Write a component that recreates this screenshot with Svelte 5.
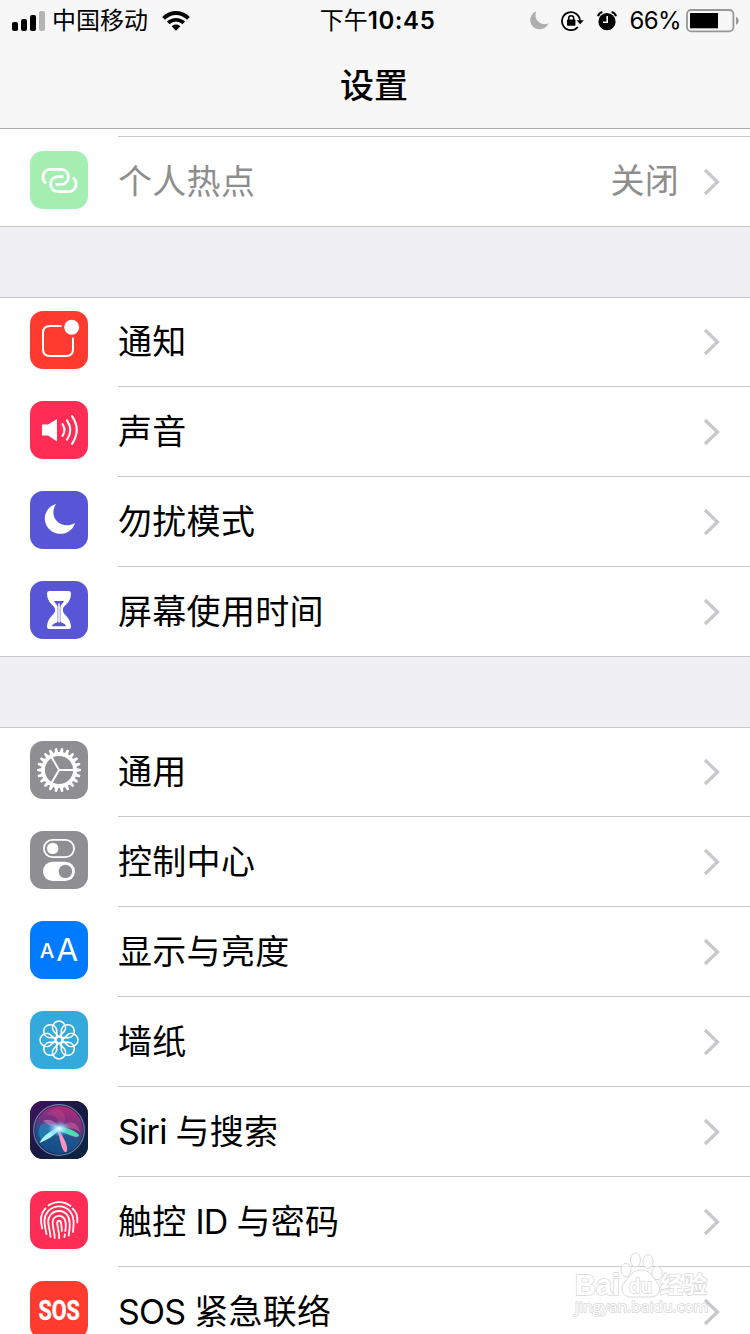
<script>
  const groups = [
    [{ icon: 'hotspot', label: '个人热点', value: '关闭', color: '#a5eeb1', muted: true }],
    [
      { icon: 'notify', label: '通知', color: '#ff3b30' },
      { icon: 'sound', label: '声音', color: '#ff2d55' },
      { icon: 'moon', label: '勿扰模式', color: '#5856d6' },
      { icon: 'hourglass', label: '屏幕使用时间', color: '#5856d6' }
    ],
    [
      { icon: 'gear', label: '通用', color: '#8e8e93' },
      { icon: 'control', label: '控制中心', color: '#8e8e93' },
      { icon: 'display', label: '显示与亮度', color: '#007aff' },
      { icon: 'flower', label: '墙纸', color: '#34aadc' },
      { icon: 'siri', label: 'Siri 与搜索', color: '#191637' },
      { icon: 'finger', label: '触控 ID 与密码', color: '#ff2d55' },
      { icon: 'sos', label: 'SOS 紧急联络', color: '#ff3b30' }
    ]
  ];
  const runs = (text) => text.match(/[\x20-\x7e]+|[^\x20-\x7e]+/g);
  const teeth = Array.from({ length: 22 }, (_, i) => (i * 360) / 22);
  const petals = Array.from({ length: 8 }, (_, i) => i * 45);
</script>

<div class="screen">
  <header>
    <div class="status">
      <div class="side">
        <svg class="signal" width="34" height="22" viewBox="0 0 34 22">
          <rect x="0" y="12" width="6" height="9" rx="2" />
          <rect x="9" y="9" width="6" height="12" rx="2" />
          <rect x="18" y="5" width="6" height="16" rx="2" />
          <rect x="27" y="1" width="6" height="20" rx="2" fill="#b4b4b4" />
        </svg>
        <span class="carrier">中国移动</span>
        <svg class="wifi" width="28" height="20" viewBox="0 0 28 20">
          <path d="M1.6 7.3C8.6.2 19.4.2 26.4 7.3" fill="none" stroke="#000" stroke-width="4" />
          <path d="M6.2 11.9C10.8 7.6 17.2 7.6 21.8 11.9" fill="none" stroke="#000" stroke-width="3.6" />
          <path d="M9.6 15.3C12.1 13 15.9 13 18.4 15.3L14 19.8Z" />
        </svg>
      </div>
      <div class="time">下午<b>10:45</b></div>
      <div class="side right">
        <svg class="s-moon" width="19" height="19" viewBox="0 0 19 19">
          <path d="M6.3.3C.5 2.6-1.5 10 2.1 14.7C6.5 20.3 15.7 19.2 18.6 12.3C15.2 13.9 11.2 13.4 8.2 10.5C5.2 7.5 4.8 3.7 6.3.3Z" fill="#aeaeae" />
        </svg>
        <svg class="s-lock" width="23" height="20" viewBox="0 0 23 20">
          <path d="M16.8 16.1A9 9 0 1 1 19 9.5" fill="none" stroke="#000" stroke-width="1.8" />
          <path d="M15.6 9.2H22.8L19.2 13.2Z" />
          <rect x="6" y="8.6" width="8.4" height="6.2" rx=".7" />
          <path d="M7.7 9V7.2a2.5 2.5 0 0 1 5 0V9" fill="none" stroke="#000" stroke-width="1.5" />
        </svg>
        <svg class="s-alarm" width="20" height="20" viewBox="0 0 20 20">
          <circle cx="10" cy="10.7" r="8.6" />
          <path d="M1 5.3C1.6 3.2 3.2 1.6 5.4 1.1M19 5.3C18.4 3.2 16.8 1.6 14.6 1.1" fill="none" stroke="#000" stroke-width="2" />
          <path d="M10.2 5V11.3H6" fill="none" stroke="#f7f7f7" stroke-width="1.6" />
        </svg>
        <span class="percent">66%</span>
        <svg class="battery" width="54" height="24" viewBox="0 0 54 24">
          <rect x="1" y="1" width="46.4" height="21.4" rx="4.2" fill="none" stroke="#979797" stroke-width="1.8" />
          <rect x="4" y="4" width="28" height="15.3" />
          <path d="M50 7.8C53.6 9.4 53.6 14.2 50 15.8Z" fill="#979797" />
        </svg>
      </div>
    </div>
    <h1>设置</h1>
  </header>

  <main>
    <div class="previous"><div></div></div>
    {#each groups as group, g}
      <section class:first={g === 0}>
        {#each group as row}
          <div class="row">
            <svg class="icon" style:background={row.color} width="58" height="58" viewBox="0 0 58 58" fill="none" stroke="#fff" stroke-linecap="round">
              {#if row.icon === 'hotspot'}
                <path stroke-width="2.8" stroke-linecap="butt" d="M16.3 32.4C10.5 28.5 12.6 18.4 20.5 18.4H31C40.8 18.4 40.8 33.4 31 33.4H25.5M42.7 26.6C48.5 30.5 46.4 40.6 38.5 40.6H28C18.2 40.6 18.2 25.6 28 25.6H33.5" />
              {:else if row.icon === 'notify'}
                <path stroke-width="2" stroke-linecap="butt" d="M31.5 15H20Q13 15 13 22V38Q13 45 20 45H36Q43 45 43 38V26.5" />
                <circle cx="41.7" cy="16.3" r="7.5" fill="#fff" stroke="none" />
              {:else if row.icon === 'sound'}
                <path stroke="none" fill="#fff" d="M12 23.5H18L27 18V40.5L18 34.5H12Z" />
                <path stroke-width="2.1" d="M32.5 23.2Q36.4 29 32.5 34.8M37 19.3Q43.6 29 37 38.7M42 15.2Q51.5 29 42 42.8" />
              {:else if row.icon === 'moon'}
                <path stroke="none" fill="#fff" d="M26 13C15.5 16 11.5 28 17.7 36.5C25.5 46.5 41.5 44.5 45 32C38.8 35.7 31.6 35 27 30.3C22.2 25.5 22.5 18.5 26 13Z" />
              {:else if row.icon === 'hourglass'}
                <path stroke="none" fill="#fff" d="M19 10H39Q41 10 41 12.5C41 22 34 24 33 27.5V30.5C34 34 41 37 41 46Q41 48 39 48H19Q17 48 17 46C17 37 24 34 25 30.5V27.5C24 24 17 22 17 12.5Q17 10 19 10Z" />
                <path stroke="none" fill={row.color} d="M24 20H34C33.2 22.2 30.8 23.3 30.4 26V40.5C31.7 42.5 35.5 42 36 45.3H22C22.5 42 26.3 42.5 27.6 40.5V26C27.2 23.3 24.8 22.2 24 20Z" />
                <path stroke-width="1.6" stroke-linecap="butt" d="M29 22.5V41.5" />
              {:else if row.icon === 'gear'}
                <circle cx="29" cy="29" r="16" stroke-width="3.8" />
                <g fill="#fff" stroke="none">
                  {#each teeth as angle}
                    <path transform={`rotate(${angle} 29 29)`} d="M46 27.1L51 27.9V30.1L46 30.9Z" />
                  {/each}
                </g>
                <path stroke-width="2" d="M29 29H44M29 29L21.5 16M29 29L21.5 42" />
              {:else if row.icon === 'control'}
                <rect x="13.9" y="8.9" width="30.2" height="17.2" rx="8.6" stroke-width="1.8" />
                <circle cx="22.7" cy="17.4" r="5.7" fill="#fff" stroke="none" />
                <rect x="13" y="30.8" width="32" height="19.2" rx="9.6" fill="#fff" stroke="none" />
                <circle cx="35.4" cy="40.4" r="6.7" fill={row.color} stroke="none" />
              {:else if row.icon === 'display'}
                <g class="latin" fill="#fff" stroke="none">
                  <text x="9.8" y="36.8" font-size="20" font-weight="500" textLength="14.6" lengthAdjust="spacingAndGlyphs">A</text>
                  <text x="26.3" y="40" font-size="31.6" font-weight="400" textLength="22" lengthAdjust="spacingAndGlyphs">A</text>
                </g>
              {:else if row.icon === 'flower'}
                <g stroke-width="1.6">
                  {#each petals as angle}
                    <path transform={`translate(29 29) rotate(${angle})`} d="M0-3.3L-5.3-8.6A6.5 6.5 0 1 1 5.3-8.6Z" />
                  {/each}
                  <circle cx="29" cy="29" r="3.2" />
                </g>
              {:else if row.icon === 'siri'}
                <defs>
                  <linearGradient id="siri-bg" x1="0" y1="0" x2="1" y2="1"><stop stop-color="#42125c" /><stop offset=".5" stop-color="#181a42" /><stop offset="1" stop-color="#0d2543" /></linearGradient>
                  <linearGradient id="siri-orb" x1=".65" y1="0" x2=".35" y2="1"><stop stop-color="#b32a78" /><stop offset=".4" stop-color="#6b3382" /><stop offset=".62" stop-color="#1c568f" /><stop offset="1" stop-color="#144b85" /></linearGradient>
                  <radialGradient id="siri-glow"><stop stop-color="#fff" /><stop offset=".35" stop-color="#9feaff" stop-opacity=".8" /><stop offset="1" stop-color="#4aafff" stop-opacity="0" /></radialGradient>
                </defs>
                <rect width="58" height="58" fill="url(#siri-bg)" stroke="none" />
                <circle cx="29" cy="29" r="24" fill="url(#siri-orb)" stroke="none" />
                <circle cx="29" cy="29" r="25.3" stroke="#8ba6cf" stroke-width="1.2" opacity=".75" />
                <g stroke="none">
                  <path d="M29 28C19 20 12 19 9 28C8 36 11 39 13 39C18 36 23 33 29 28Z" fill="#2a9ed0" opacity=".5" />
                  <path d="M29 28C26 20 19 17 13 20C17 22 22 27 29 28Z" fill="#d990d2" opacity=".55" />
                  <path d="M29 28C36 25 39 12 28 8C23 8 18 11 16 14C25 13 30 18 29 28Z" fill="#e8558f" opacity=".25" />
                  <path d="M29 28C39 17 48 21 50 31C44 26 36 27 29 28Z" fill="#c75a92" opacity=".65" />
                  <path d="M29 25.5C38 27 46 30 49 34C48 39 38 33 29 30Z" fill="#4be0b0" />
                  <path d="M27 27C34 36 39 46 36.5 51C31.5 52 31 39 27 29Z" fill="#ff92bd" />
                  <path d="M31 27C24 35 17 39 9.5 42C12.5 35 21 30 29 25Z" fill="#a8f5ff" />
                  <ellipse cx="29" cy="27.8" rx="12" ry="8" fill="url(#siri-glow)" />
                </g>
              {:else if row.icon === 'finger'}
                <path stroke-width="1.8" d="M18.5 14.5C25 9.8 34 10 40.5 15M12.2 37.5C10.2 30 10.2 22.5 15.5 17.3M42.5 17.5C47 21 47.7 26 47.3 31.5M16.5 43C14.7 34 12.5 27 17.7 20.7C24 13.5 34.5 13.7 40 20.3C45 26.5 43.6 34 43 41M20.5 45.7C20 36.5 15.5 30 20.5 24C25 18.5 33.5 18.7 37.5 24.3C41 30 39.7 37 38.7 44.5M24.7 47C24.7 38 20.5 32.5 23.7 27.5C26.3 24 32 24 34.5 28C36.5 32 36 36 35.3 40M29.2 47.3C29.5 41 27.3 36 27.2 32C27.3 29 30.7 29 31 32C31.5 35 32 37 31.8 40M34.8 43.5L34.5 46" />
              {:else if row.icon === 'sos'}
                <text class="sos" x="8.4" y="38.9" font-size="27" font-weight="700" textLength="41.4" lengthAdjust="spacingAndGlyphs" fill="#fff" stroke="#fff" stroke-width=".4">SOS</text>
              {/if}
            </svg>
            <div class="body" class:muted={row.muted}>
              <span class="label">{#each runs(row.label) as run}<span class:tight={/[A-Z]/.test(run)}>{run}</span>{/each}</span>
              {#if row.value}<span class="value">{row.value}</span>{/if}
              <svg class="chevron" width="18" height="28" viewBox="0 0 18 28">
                <path d="M2 2L14.5 14L2 26" fill="none" stroke="#c7c7cc" stroke-width="3.2" />
              </svg>
            </div>
          </div>
        {/each}
      </section>
    {/each}
  </main>

  <svg class="watermark" width="150" height="76" viewBox="0 0 150 76">
    <g fill="#fff" fill-opacity=".8" stroke="#d9d9d9" stroke-width="1">
      <ellipse cx="16" cy="20" rx="5" ry="6.8" />
      <ellipse cx="25.5" cy="10" rx="5" ry="7" />
      <ellipse cx="38" cy="11.5" rx="5" ry="7" />
      <ellipse cx="47" cy="23" rx="5.2" ry="6.7" />
      <path d="M31 20C21 20 20 27 15 32C9 38 13 47 20 47H41C49 47 52 39 47 32C42 27 41 20 31 20Z" />
    </g>
    <g class="mark" fill="#fff" stroke="#dadada" stroke-width="1.6" paint-order="stroke">
      <text x="-35" y="45" font-size="30" textLength="45" lengthAdjust="spacingAndGlyphs">Bai</text>
      <text x="19" y="43" font-size="21" textLength="23" lengthAdjust="spacingAndGlyphs">du</text>
      <text x="50" y="43" font-size="23" textLength="47">经验</text>
      <text class="url" x="-35" y="62" font-size="15" textLength="133" lengthAdjust="spacingAndGlyphs">jingyan.baidu.com</text>
    </g>
  </svg>
</div>

<style>
  :global(body) { margin: 0; overflow: hidden; }
  .screen {
    position: relative;
    width: 750px;
    height: 1334px;
    overflow: hidden;
    background: #efeff4;
    color: #000;
    font-family: Inter, "Noto Sans CJK SC", sans-serif;
  }
  header { box-sizing: border-box; height: 129px; background: #f7f7f7; border-bottom: 1px solid #acacae; }
  .status { display: grid; grid-template-columns: 1fr auto 1fr; align-items: center; height: 40px; padding: 0 10px 0 12px; font-size: 24px; line-height: 40px; }
  .side { display: flex; align-items: center; }
  .right { justify-content: flex-end; }
  .carrier { margin-left: 6px; padding-top: 1px; }
  .wifi { margin-left: 14px; }
  .time { padding-top: 1px; margin-left: 3px; }
  .time b { font-weight: 600; letter-spacing: .6px; }
  .s-lock { margin-left: 12px; }
  .s-alarm { margin-left: 13px; }
  .percent { margin-left: 12px; padding-top: 1px; letter-spacing: -.6px; }
  .battery { margin-left: 6px; }
  .s-moon, .s-lock, .s-alarm, .percent { position: relative; left: 1px; }
  h1 { margin: 0; padding-top: 2px; height: 87px; font-size: 34px; line-height: 87px; font-weight: 500; text-align: center; text-indent: -2px; }
  .previous { height: 8px; padding-left: 118px; background: #fff; }
  .previous div { height: 7px; border-bottom: 1px solid #c8c7cc; }
  section { margin-bottom: 70px; background: #fff; box-shadow: inset 0 1px #c8c7cc, inset 0 -1px #c8c7cc; }
  section.first { box-shadow: inset 0 -1px #c8c7cc; }
  .row { display: flex; align-items: center; height: 90px; padding-left: 30px; }
  .icon { flex: none; margin-top: -4px; border-radius: 13px; }
  .body { box-sizing: border-box; display: flex; align-items: center; flex: 1; height: 90px; margin-left: 30px; padding-right: 29px; border-bottom: 1px solid #c8c7cc; font-size: 34px; letter-spacing: .3px; }
  .label { flex: 1; line-height: 88px; white-space: pre; }
  .tight { letter-spacing: -.75px; }
  .value { margin-right: 24px; line-height: 88px; margin-top: -1px; }
  .muted { color: #8e8e8e; }
  .latin { font-family: Inter, sans-serif; letter-spacing: 0; }
  .sos { font-family: Roboto, sans-serif; letter-spacing: 0; }
  .watermark { position: absolute; left: 610px; top: 1250px; overflow: visible; }
  .mark { font-family: "Liberation Sans", "Noto Sans CJK SC", sans-serif; font-weight: 700; }
  .url { font-family: "Open Sans", sans-serif; font-weight: 400; }
</style>
